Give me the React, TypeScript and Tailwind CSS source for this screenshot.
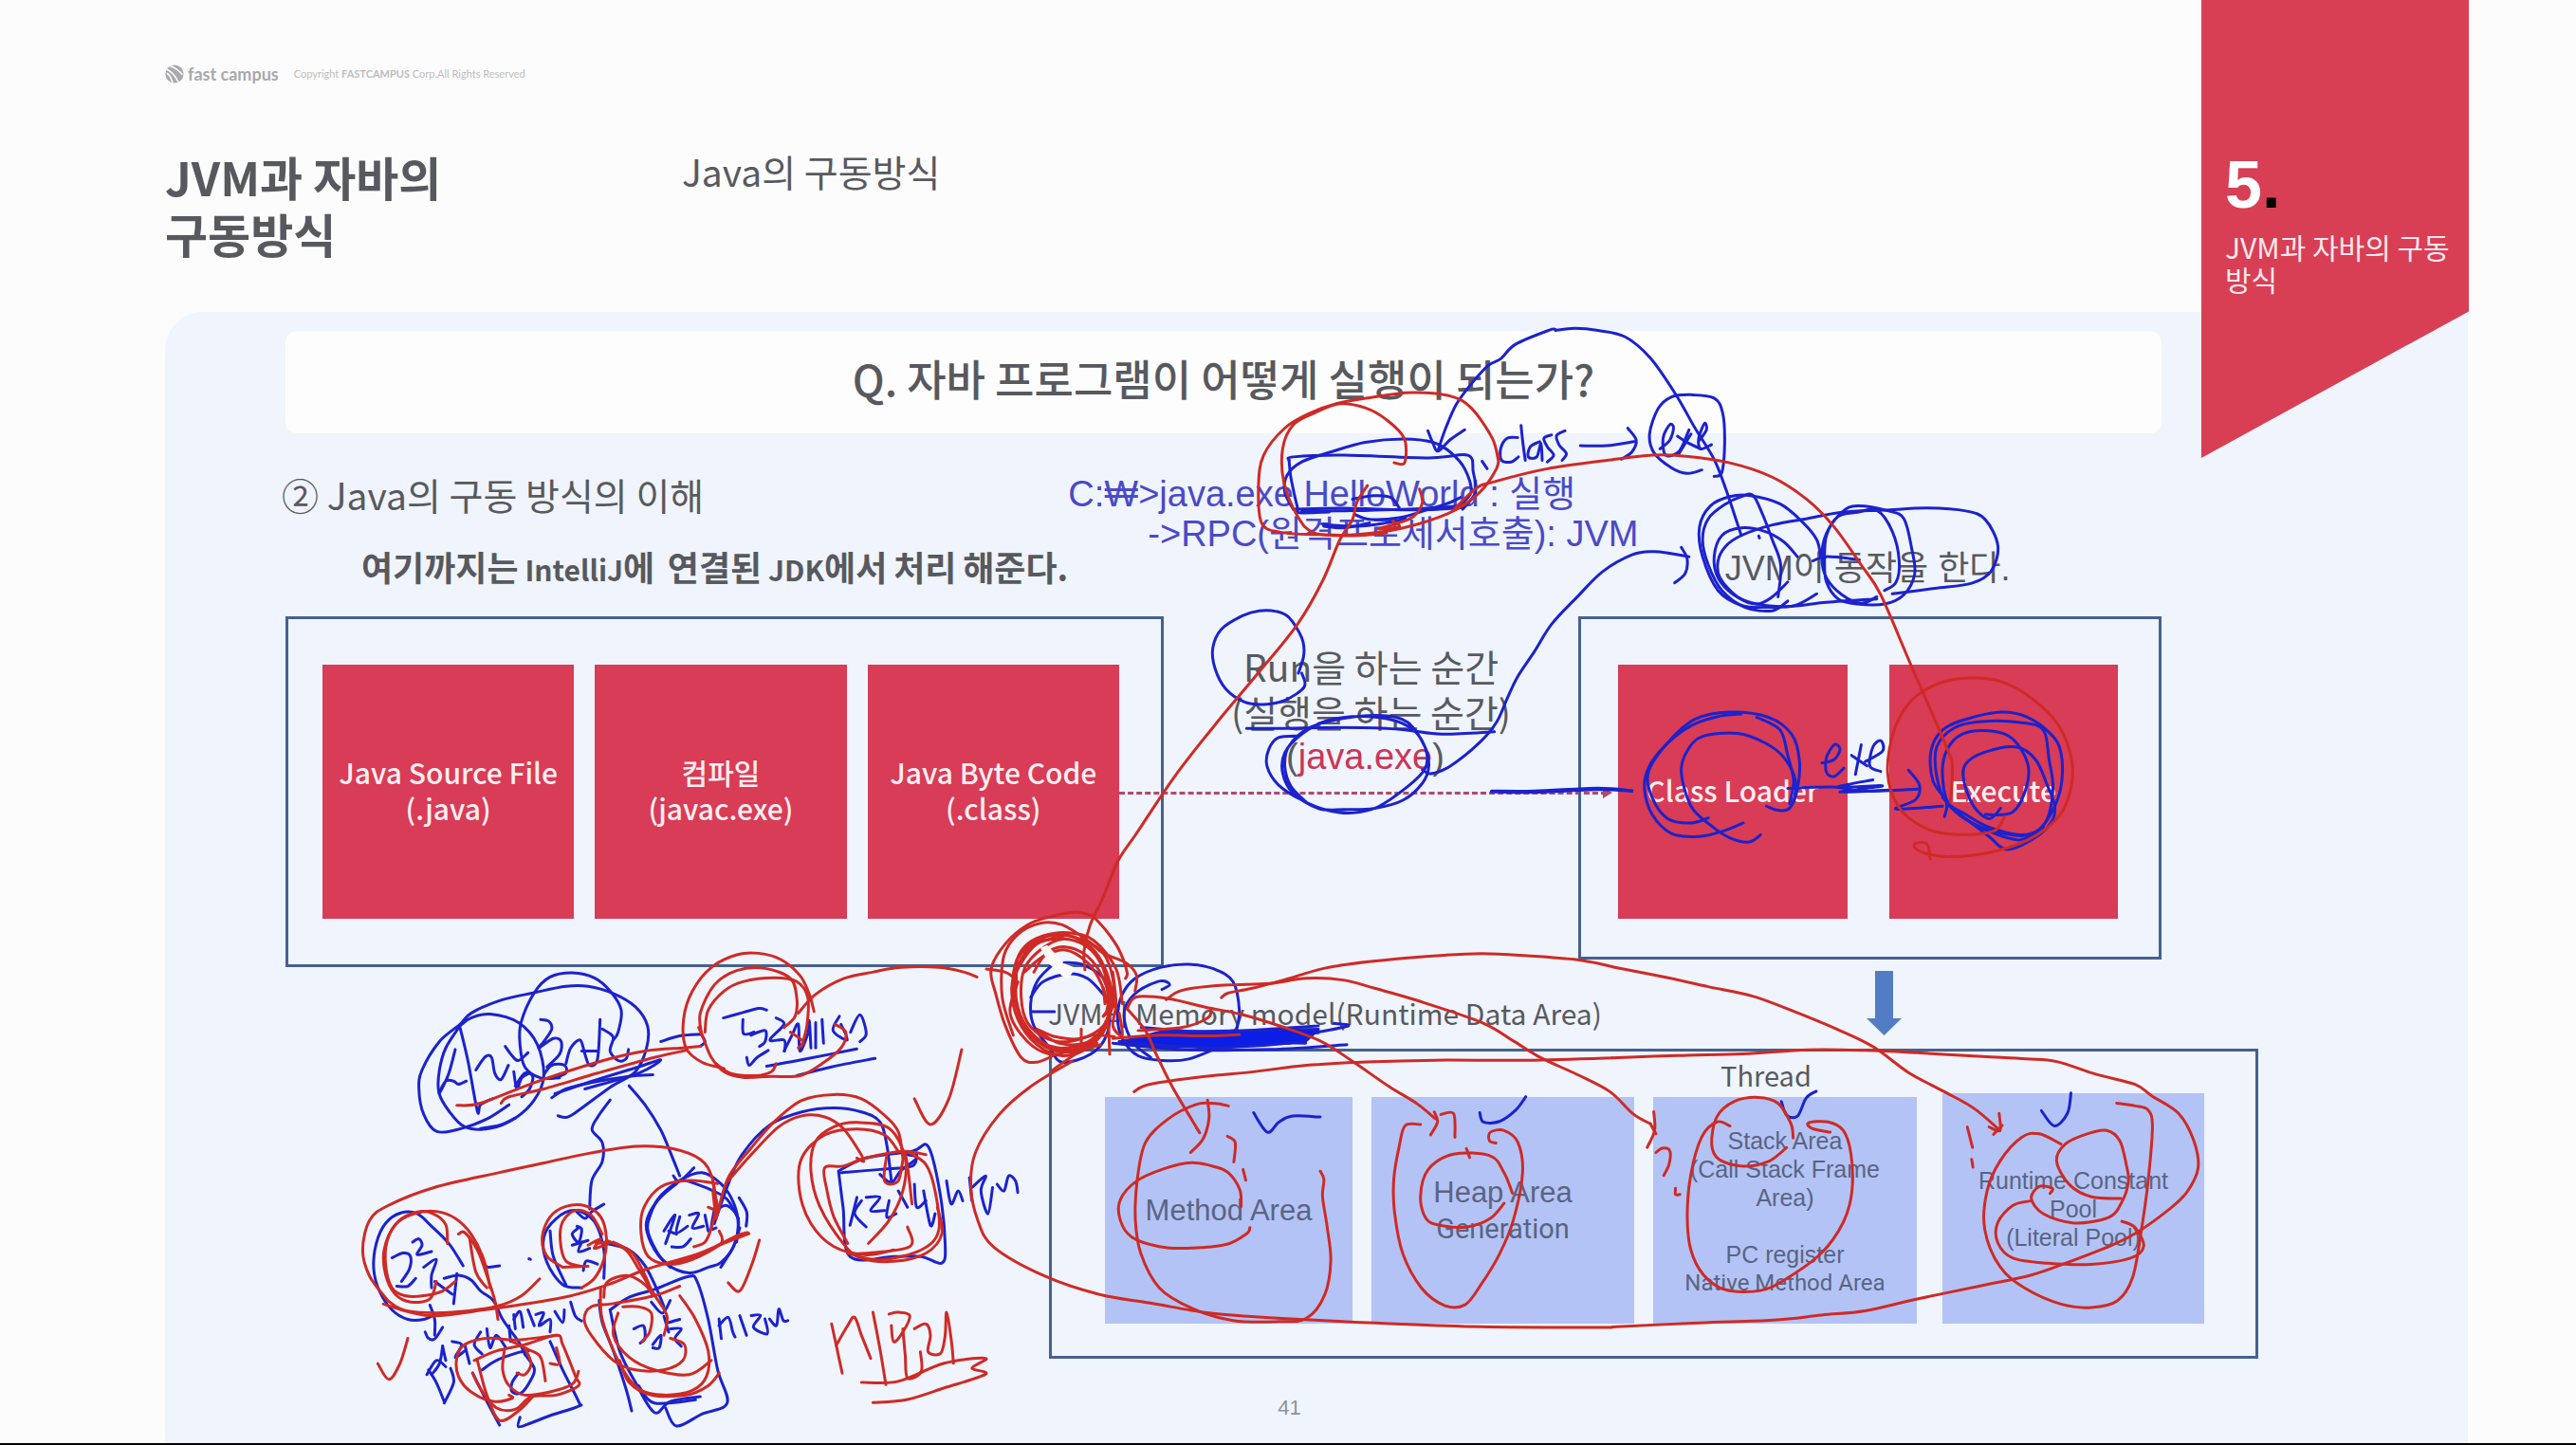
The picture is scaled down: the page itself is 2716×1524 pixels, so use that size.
import type { ReactNode } from "react";

const KR = "font-['Noto_Sans_CJK_KR',sans-serif]";
const SANS = "font-['Liberation_Sans','Noto_Sans_CJK_KR',sans-serif]";

/* ---------- pen annotations ---------- */

type Layer = {
  x: number;
  y: number;
  sx: number;
  sy: number;
  blue: string[];
  red: string[];
};

const layers: Layer[] = [
  {
    // command line, Run, java.exe
    x: 1060, y: 320, sx: 0.4464, sy: 0.3571,
    blue: [
      "1299,78 1285,80 1205,122 1170,165 1140,185 1100,240 1065,300 1040,370 1022,435",
      "998,378 1010,415 1022,438 1050,405 1085,375",
      "1126,468 1138,490",
      "1210,398 1185,400 1170,430 1172,465 1195,470 1212,455",
      "1218,362 1222,410 1228,465",
      "1262,410 1240,425 1235,455 1255,455 1265,415 1268,465",
      "1290,390 1272,400 1280,425 1295,450 1280,470",
      "1322,378 1302,392 1308,420 1325,445 1315,465",
      "1358,422 1420,422 1485,410",
      "1470,370 1490,405 1480,440 1455,462",
      "680,610 800,607 980,612 1080,605",
      "700,615 820,614 980,608 1075,600",
      "670,465 680,455 800,450 1000,458 1092,450 1105,500 1110,560 1080,610",
      "670,465 675,520 690,605 695,620 765,618",
      "680,610 660,560 665,510 700,470 770,440 850,412 940,402 1010,412 1050,440 1085,490 1100,560 1070,600",
      "820,580 870,570 910,575 930,605",
      "825,625 860,640 930,635 1000,610 1050,590 1075,575",
      "750,655 830,660 900,650 945,638",
      "752,660 800,665 860,650",
      "692,1095 705,1040 700,990 670,930 640,912 600,910 560,925 510,965 490,1020 495,1080 520,1140 565,1180 610,1187 660,1175 706,1135 700,1095",
      "570,1258 650,1258 780,1255 900,1258 960,1265 1030,1275 1155,1268",
      "695,1280 645,1285 622,1320 618,1370 645,1425 700,1470 760,1500 820,1508 880,1490 950,1430 990,1380 995,1330 970,1270 920,1235 840,1222 760,1235 700,1275 660,1330 655,1390 680,1450 740,1495 800,1498 870,1495 940,1470 985,1420 1000,1370 990,1310 950,1240 890,1220 800,1228 720,1255 670,1310 660,1370 675,1430 710,1475",
      "985,1380 1005,1392 1050,1370 1120,1300 1160,1240 1185,1170 1210,1105 1250,1030 1290,950 1350,870 1410,795 1480,745 1530,735 1568,740",
      "1148,1443 1250,1443 1400,1435 1480,1442",
      "1148,1445 1250,1447 1400,1439 1480,1444",
    ],
    red: [
      "1165,470 1150,400 1100,310 1050,275 960,265 860,280 780,298 720,325 660,370 610,450 598,540 605,650 650,678 740,685 830,685 940,665 1050,620 1120,560 1160,490 1165,450",
      "918,472 943,472 942,400 900,345 850,310 790,298 730,325 680,360 655,430 658,530 690,630 730,680 820,688 900,680",
      "855,540 830,590 820,640 790,700 750,820 690,950 600,1090 500,1240 400,1400 310,1568 266,1650 230,1760 200,1840 186,1915 188,1972",
      "978,550 985,590 965,630 930,650 880,668 930,662 915,645",
      "1060,610 1110,550 1150,530 1280,490 1436,463",
    ],
  },
  {
    // exe, JVM, class loader, execute
    x: 1640, y: 320, sx: 0.40816, sy: 0.44643,
    blue: [
      "480,550 440,440 410,370 360,295 310,215 245,130 180,80 110,65 50,60 0,65",
      "378,395 340,403 300,390 255,355 243,310 265,250 300,222 350,217 410,225 432,260 437,330 430,400 410,410",
      "270,345 295,325 305,295 295,288 278,320 285,360 320,350 345,300",
      "315,315 340,330 375,345",
      "320,355 350,310",
      "372,325 390,300 385,285 370,320 375,345 403,335",
      "294,592 345,600",
      "325,578 340,605 335,640 308,662",
      "675,688 620,715 550,720 480,715 420,680 380,600 372,530 400,480 450,458 500,455 580,475 640,520 675,560 685,600",
      "600,705 560,728 490,720 430,680 395,620 380,560 395,510 440,475 480,458 510,455 535,500 560,560 582,620 575,695",
      "625,600 590,565 540,540 480,532 430,550 410,600 420,650 460,690 520,712 600,718 700,708 830,700",
      "600,660 560,695 520,712 470,695 425,650 420,610 440,575 480,550 560,525 650,510 740,495 850,490 960,485 1060,492 1110,512 1143,575 1125,635 1075,663 980,675 870,688",
      "850,680 880,660 888,610 870,540 830,490 780,495 730,505 700,550 695,610 700,660 730,700 780,712 850,712 900,690 928,640 920,580 900,510 860,492 780,480 740,495 700,545 688,600 700,650 740,690 790,710 830,695",
      "665,610 700,600 785,607",
      "525,551 527,556",
      "480,972 420,978 350,1000 280,1050 240,1100 230,1150 250,1210 300,1255 370,1262 430,1250 485,1230",
      "395,1218 350,1230 290,1220 250,1170 240,1110 290,1040 360,985 450,968 550,980 610,1020 630,1080 625,1150 605,1195 575,1200 545,1190",
      "530,1258 500,1275 450,1265 400,1235 350,1190 325,1110 340,1060 380,1025 470,1018 540,1040 590,1075 620,1130 615,1180",
      "520,980 580,1010 600,1070 615,1130 605,1185",
      "600,1148 720,1145 800,1155 935,1150",
      "912,1105 940,1140 930,1175 880,1197 1000,1190",
      "820,1128 730,1145 845,1142 735,1157 860,1152",
      "688,1088 720,1080 735,1055 720,1045 700,1075 700,1110 720,1120 745,1100",
      "765,1070 805,1095",
      "790,1045 775,1115",
      "800,1085 845,1060 840,1035 820,1050 812,1095 840,1108",
      "1005,1215 1010,1180 975,1130 970,1060 1000,1010 1060,985 1150,968 1220,980 1280,1020 1305,1060 1308,1130 1290,1190 1250,1245 1200,1258 1120,1240 1060,1210 1010,1180 985,1120 985,1050 1030,1005 1100,990 1200,992 1260,1010 1275,1080 1285,1150 1265,1230 1210,1260 1100,1240 1020,1190 1000,1120 1010,1060 1050,1020 1120,1012 1180,1030 1220,1090 1215,1150 1180,1205 1110,1210",
      "1150,1195 1120,1220 1080,1190 1055,1130 1060,1090 1110,1062 1190,1050 1240,1080 1270,1140 1290,1190 1280,1230 1230,1270 1165,1293 1120,1262 1060,1220 1010,1185",
      "1000,1170 1050,1215 1120,1250 1200,1270 1260,1240",
    ],
    red: [
      "150,370 250,360 330,362 450,378 560,412 650,465 720,530 790,620 840,690 920,860 1010,1050 1025,1100 1020,1180",
      "1160,1215 1130,1250 1030,1257 950,1240 885,1190 858,1110 875,1010 920,940 990,900 1070,887 1150,895 1230,935 1300,1000 1335,1090 1325,1170 1290,1225 1220,1270 1120,1300 1020,1310 960,1303 930,1290 930,1278 960,1280 968,1315",
    ],
  },
  {
    // process / thread sketches
    x: 380, y: 980, sx: 0.4847, sy: 0.34694,
    blue: [
      "770,900 800,780 830,690 890,600 960,560 1030,548 1090,560 1130,590 1145,660 1155,770",
      "1130,750 1155,775 1175,740 1210,700 1190,690",
      "1040,740 1050,850 1065,1000 1160,1000 1220,1000 1265,1020 1272,960 1260,800 1235,665 1200,680 1100,700 1040,740",
      "1045,745 1130,735 1200,725 1210,690",
      "1080,820 1065,905",
      "1090,830 1075,870 1100,910",
      "1100,820 1130,820 1110,860 1140,860",
      "1150,830 1145,880 1165,870",
      "1170,800 1190,850",
      "1205,780 1210,850 1230,830",
      "1225,800 1240,905 1250,870",
      "1275,770 1285,840 1300,800 1310,830",
      "1325,760 1330,830",
      "1330,790 1360,755 1350,800 1365,870 1375,790",
      "1385,780 1400,800 1410,755 1425,770 1430,805",
      "780,1190 785,1250",
      "780,1210 800,1185 810,1230 815,1245",
      "825,1180 840,1240",
      "850,1180 870,1180 855,1215 885,1235 880,1190",
      "890,1190 905,1210 910,1160 920,1195 930,1195",
    ],
    red: [
      "1205,520 1240,598 1280,520 1308,370",
      "60,1135 20,1060 5,980 20,890 60,845 160,790 300,745 400,715 500,685 600,665 680,672 740,705 765,760 775,850",
      "60,1135 100,1165 200,1170 300,1150 350,1120 390,1068",
      "50,1145 150,1180 280,1160 440,1125 540,1085 620,1040 740,990 790,960 845,930",
      "800,1080 825,1105 850,1030 868,950",
      "775,880 800,760 850,670 900,590 960,525 1030,507 1090,520 1140,570 1170,620 1180,700",
      "800,770 850,690 910,605 960,572 1010,575 1050,610 1085,680 1095,710 1080,700",
      "1170,680 1140,630 1080,612 1010,630 960,700 955,800 980,900 1030,970 1100,995 1160,980",
      "1105,960 1150,890 1180,800 1185,700 1150,610 1080,592 1030,605 990,650 980,740 1000,850 1050,960 1090,1005 1160,1015 1230,990 1265,930 1255,850",
      "1060,960 1030,880 1015,800 1010,730 1050,725 1100,700 1180,680 1230,690",
      "1190,680 1230,720 1250,800 1258,920 1220,980 1130,1010 1060,990",
      "1190,910 1195,970 1100,990 1060,990",
      "1145,690 1140,770 1170,770 1185,690 1200,840",
      "1025,1205 1035,1270 1048,1355",
      "1035,1270 1060,1210 1075,1185 1090,1240 1110,1310",
      "1115,1170 1130,1280 1143,1390",
      "1150,1175 1170,1170 1195,1180 1180,1230 1160,1260 1155,1210",
      "1180,1220 1185,1300 1190,1370 1220,1350 1218,1290",
      "1205,1220 1230,1205 1240,1240 1235,1290 1262,1295 1272,1240 1275,1170 1285,1250 1290,1325",
      "1090,1383 1170,1380 1270,1325 1360,1310 1330,1340 1360,1358 1270,1400 1190,1435 1115,1445",
    ],
  },
  {
    // circled words above the process sketches
    x: 430, y: 1010, sx: 0.33333, sy: 0.33333,
    blue: [
      "320,470 250,515 170,545 92,555 50,500 35,420 45,360 100,270 165,215 200,180 290,140 400,115 500,95 570,95 650,118 720,160 758,220 755,290 720,365 640,415 530,495 500,510 475,505",
      "165,220 120,290 100,360 98,430 130,490 180,540 260,545 340,512 400,455 430,380 410,280 350,210 260,183 200,195 165,220",
      "340,512 290,535 230,545",
      "480,385 420,385 370,350 355,280 358,210 400,115 450,65 520,52 590,68 640,110 675,170 665,240 650,265",
      "165,225 190,330 220,490 230,470 270,450",
      "150,295 130,370 105,425 100,430 120,395 145,395 160,405 185,395",
      "215,360 245,318 265,320 275,370 295,390 318,345",
      "308,285 330,315 350,330 380,305",
      "335,365 345,420 360,385 385,370",
      "340,410 370,370 395,380 385,420 360,445",
      "420,200 445,205 455,230 430,270 415,290 460,260 485,270 480,310 440,350",
      "430,375 455,345 495,345 500,370 460,385",
      "500,340 515,290 545,265 560,310 575,345 600,325 608,200",
      "550,300 600,300",
      "615,230 640,245 650,260 640,300 665,330 690,325 698,295",
      "455,448 500,420 580,400 700,380 775,375",
      "465,435 600,390 730,350 800,328 730,370 560,420",
      "640,455 600,510 583,550 615,590 615,650 582,710 575,800",
      "530,805 560,830 580,810 620,785",
      "700,410 750,470 800,550 830,620 860,695",
      "840,695 860,712 905,670",
      "800,270 860,252 930,247",
      "930,250 940,270 925,285",
      "998,195 1060,178 1110,165 1135,170",
      "1060,200 1062,245 1095,240",
      "1085,250 1130,235 1130,270 1112,285",
      "1072,320 1080,345 1105,320 1140,298",
      "1165,195 1190,215 1145,265 1190,265 1192,300",
      "1190,300 1215,250 1235,215 1240,300 1265,245 1270,205 1275,290",
      "1290,210 1290,290",
      "1310,200 1315,275",
      "1365,190 1345,235 1390,265 1370,215",
      "1400,240 1430,185 1450,245 1430,270",
      "1135,348 1260,325 1420,293",
      "1230,378 1340,350 1478,323",
      "860,712 800,760 755,840 770,910 820,975 890,1003 950,985 990,970 1030,920 1045,850 1030,780 990,720 930,685 860,710 790,770 760,840",
      "850,720 785,780 758,860 790,940 830,985",
      "980,800 1010,790 1045,830 1040,905",
      "880,710 960,740 1010,770 1045,830",
      "1048,765 1072,810 1070,855",
      "820,975 880,965 920,950",
      "990,985 1030,920 1050,860",
      "810,870 845,820 815,910",
      "825,870 850,880",
      "860,825 850,875 885,855",
      "835,920 870,920 895,895",
      "890,820 920,815 900,860 935,855",
      "940,820 950,870",
      "970,800 960,860 975,860",
    ],
    red: [
      "155,472 230,465 400,400 600,335 750,300 870,290 925,285",
      "295,465 320,445 430,420 600,370 780,320 880,298",
      "1285,175 1270,120 1240,60 1180,10 1110,-10 1040,-5 960,35 900,110 872,200 880,290 930,335 1000,355",
      "930,250 925,180 970,90 1040,45 1130,38 1210,70 1230,130 1225,190 1190,225",
      "940,240 950,170 1000,110 1060,80 1160,68 1230,80 1265,130 1262,220 1245,285",
      "920,225 935,260 960,320 1000,365 1060,383 1150,380 1240,378 1310,340 1370,290 1385,240 1350,215",
      "1165,340 1150,365 1100,378 1020,370 975,340",
      "1210,240 1250,270 1235,290",
      "1235,180 1290,120 1380,70 1470,50 1560,35 1680,35 1760,50 1800,65",
      "980,720 890,710 800,730 745,800 738,880 760,950 820,975 900,960 990,910 985,870",
      "965,715 975,790 960,860 940,905 905,920",
      "950,795 980,800 965,740 975,830",
      "1075,875 1040,885 960,925 860,965 800,975",
    ],
  },
  {
    // lower left detail
    x: 380, y: 1260, sx: 0.33333, sy: 0.33333,
    blue: [
      "325,230 280,160 220,100 180,65 130,62 80,95 50,160 42,240 60,310 100,370 150,400 200,400 235,385",
      "100,205 135,190 158,200 155,240 130,280",
      "115,295 150,295 175,270",
      "165,155 185,145 195,165 180,195 225,185",
      "200,235 240,210 225,260 225,300",
      "235,280 290,320",
      "265,270 310,260 350,275 380,310 420,340 450,400 500,470 520,510",
      "305,255 295,350",
      "395,230 405,235 440,230",
      "533,208 538,210",
      "220,355 235,400 235,450",
      "205,440 215,460 235,462 260,425",
      "770,270 770,180 740,90 680,55 620,80 580,140 590,220 640,290 700,300",
      "600,120 610,200 650,290",
      "690,110 670,130 690,155 700,115 685,105",
      "670,165 720,150",
      "700,155 690,185 725,175",
      "705,245 715,215 750,225",
      "780,160 850,180 900,230 940,310 960,360",
      "920,345 955,380 980,340",
      "790,370 850,330 930,305 1035,265 1065,280 1100,400 1130,560 1160,665 1080,700 1000,738 965,680",
      "790,370 820,500 870,600 930,695 980,660 1075,645",
      "880,610 930,665 1060,655",
      "755,340 765,410 800,500 840,620 858,690",
      "865,430 895,420 900,460 885,475",
      "925,480 950,450 945,490 925,490",
      "960,390 975,440",
      "975,410 1010,400",
      "980,430 1015,430 995,460 1015,485",
      "485,385 490,430",
      "485,400 505,375 515,425",
      "530,370 550,420",
      "555,385 580,380 565,420 600,400 600,440",
      "615,375 640,410 645,370",
      "665,345 680,390 700,405",
      "260,485 270,530",
      "290,470 320,480 300,520 330,500",
      "330,480 345,540",
      "380,440 360,480 385,510",
      "400,430 410,490 430,450 460,490",
      "470,420 475,470",
      "210,575 240,530 270,550",
      "215,560 240,600 265,660",
      "285,555 295,600 265,665",
      "260,485 250,540 225,575",
      "385,560 430,530 500,505 530,500",
      "355,570 400,660 440,735",
      "600,470 640,560 690,660 690,675 600,705 540,728 500,740 505,710",
      "500,570 480,600 480,630 510,632 540,590 550,555 520,510",
    ],
    red: [
      "275,160 270,100 230,65 180,60 120,90 85,150 80,230 100,300 140,325 200,325 260,310 300,280",
      "410,300 390,210 350,130 300,80 240,58 170,65 110,100 75,180 80,260 110,320 160,345 220,335 240,280",
      "310,130 330,125 370,180 400,260 425,340 435,400",
      "345,140 365,250 400,300",
      "640,235 590,200 575,140 600,75 650,42 710,40 760,75 778,140 770,210 740,270 700,300",
      "700,232 650,215 632,150 640,90 680,55 730,70 765,130",
      "640,235 720,232",
      "720,165 760,145 740,175 790,155 745,160",
      "780,150 840,180 880,240 910,290 935,330 970,390 960,450",
      "800,155 860,190 900,260 925,320",
      "770,330 775,290 800,270 850,262 900,290 925,325",
      "1010,295 930,325 800,350 730,360 708,400 730,450 800,530 870,560 960,560 1020,530 1025,480 980,460",
      "760,300 765,400 820,540 880,620 960,640 1050,625 1095,580 1100,500 1060,400 1010,325",
      "830,360 880,360 920,380 915,440 890,470",
      "815,380 800,450 850,520 930,560 1040,575 1110,530",
      "820,530 850,600 920,640 1030,640 1100,610 1135,570",
      "360,530 430,500 520,480 620,450 640,480 680,580 690,610 620,640 540,645 490,685 430,680 380,620 355,570",
      "620,450 500,465 400,460 330,480 305,520 310,580 350,630 420,660 480,650 470,640",
      "455,500 450,560 470,610 520,640 600,630 670,605 690,565",
      "370,530 400,640 440,720 500,690 545,645",
      "480,470 530,495 570,520 585,595",
      "520,490 540,540 520,575 495,570",
      "600,540 630,540 620,490",
      "55,540 90,590 125,540 150,460",
    ],
  },
  {
    // memory areas, left half
    x: 980, y: 960, sx: 0.4847, sy: 0.35714,
    blue: [
      "705,602 735,660 760,630 790,612 850,615",
      "1197,602 1205,630 1240,628 1275,595 1297,555",
    ],
    red: [
      "430,295 450,260 520,265 600,290 680,312 760,345 850,390 920,450 1000,525 1060,575 1100,620",
      "1098,600 1105,630 1090,668",
      "430,295 470,360 490,420 530,530 585,655 580,645",
      "605,565 608,620 595,680 568,720",
      "515,268 550,240 640,225 740,220 820,205 900,210 970,235 1060,270 1200,335 1270,390 1330,440 1410,490 1480,540 1530,605 1568,635",
      "635,262 650,248 700,235 770,210 860,175 960,155 1080,140 1200,132 1300,138 1410,150 1485,170",
      "445,540 480,518 600,495 700,482 820,462 950,452 1100,447 1300,447 1485,440",
      "1485,1237 1200,1235 900,1220 700,1205 600,1193 480,1165 370,1140 250,1085 140,1000 105,920 90,820 100,720 150,610 220,525 310,450",
      "650,582 620,575 580,578 520,620 470,690 452,800 448,920 460,1020 500,1120 570,1180 660,1217 760,1220 820,1210 860,1140 873,1040 865,940 855,850 858,800 850,775",
      "678,880 675,830 650,780 620,762 570,750 510,768 450,805 415,860 415,920 440,970 500,998 560,1003 645,992 690,960 697,942",
      "648,672 665,690 662,748",
      "682,770 688,802",
      "1068,637 1035,640 1022,700 1010,800 1012,900 1030,1020 1070,1120 1120,1172 1165,1170 1200,1110 1240,1020 1270,920 1290,780 1280,690 1250,655 1220,660 1218,685 1232,692",
      "1268,840 1250,780 1220,730 1140,725 1085,770 1068,850 1080,915 1110,935 1170,940 1220,915 1250,870",
      "1168,708 1175,735",
      "1112,608 1140,605 1143,675",
    ],
  },
  {
    // memory areas, right half
    x: 1700, y: 960, sx: 0.45918, sy: 0.35969,
    blue: [
      "388,565 400,605 425,608 445,555 468,535",
      "985,592 1015,637 1045,600 1053,540",
    ],
    red: [
      "87,630 100,660",
      "95,595 97,650 80,700",
      "100,715 115,702 132,710 130,750 118,782",
      "145,820 145,838 155,838",
      "0,170 120,200 220,228 320,255 400,292 520,355 600,405 680,480 760,535 830,585 890,650",
      "888,600 890,650 865,640",
      "895,635 875,662",
      "0,437 150,430 300,425 450,413 580,415 700,422 850,433 950,440 1020,448 1110,485 1200,515 1240,550 1300,600 1335,680 1345,760 1320,830 1280,880 1210,945 1150,985 1040,1040 960,1075 850,1105 700,1145 580,1180 480,1192 370,1207 200,1215 0,1227",
      "270,637 240,625 205,670 180,780 172,900 180,1000 210,1075 260,1118 340,1120 400,1085 480,1010 530,920 550,830 548,720 530,650 495,625 450,628 460,645 500,655",
      "415,672 410,630 380,570 335,553 280,565 240,610 228,690 245,735 300,755 360,740 400,700",
      "1158,570 1200,578 1230,590 1240,640 1230,800 1215,940 1195,1080 1160,1150 1100,1170 1030,1160 950,1115 890,1050 855,940 860,830 890,740 940,670 980,660 1030,690",
      "1168,850 1100,845 1050,810 1020,740 1040,690 1090,660 1135,650 1165,680 1180,750 1185,800 1170,860 1140,905 1060,922 990,895 962,850 980,815 1010,820 1005,835",
      "960,857 920,870 885,920 885,980 920,1025 1000,1040 1100,1043 1190,1025 1220,990 1200,935 1170,917",
      "815,640 827,700",
      "825,735 828,758",
    ],
  },
  {
    // circled JVM and Memory
    x: 1040, y: 960, sx: 0.33333, sy: 0.33333,
    blue: [
      "205,180 160,230 140,300 150,370 200,440 240,485 330,460 380,400 390,310 370,220 300,175 240,170",
      "140,280 180,230 260,205 320,220 370,270",
      "145,325 215,325",
      "790,390 800,320 780,230 720,190 640,175 550,185 470,220 430,270 415,340 430,410 480,465 560,480 640,475 730,440",
      "555,255 580,240 550,228 480,260 440,310 440,370 470,430 520,470",
      "490,375 700,390 900,380 1050,370",
      "1050,390 1145,370 1100,362",
      "400,425 620,445 900,445 1140,430",
      "420,420 560,410 800,420 1010,425",
      "450,430 600,435 800,430 960,425",
      "550,415 750,425 950,412",
      "550,395 750,398 1050,392",
      "560,405 760,408 1000,400",
    ],
    red: [
      "330,20 280,10 200,25 130,50 60,110 15,190 30,270 60,370 110,470 160,485 220,460",
      "335,20 380,70 420,130 445,200 440,220",
      "85,400 50,280 55,150 100,80 170,45 240,50 320,100 370,140 440,170 475,210 470,260",
      "255,80 180,90 110,140 85,220 95,310 130,390 200,440 280,445 350,400 395,320 390,230 350,150 290,95 220,80 150,110 105,170 90,250 105,340 150,410 220,450 310,440 370,380 400,300 400,220 370,140 300,90",
      "240,90 160,110 105,180 80,250 100,350 160,430 240,465 320,440 380,370 385,280 370,190 320,120 240,95 170,130 120,190 110,280 130,360 190,410 260,420 340,400 405,405",
      "150,200 190,140 250,120 320,150 370,220 390,300 370,370 300,410 220,405 160,380",
      "430,300 410,190 340,100 260,75 180,85 120,120 90,180 85,250 110,350 170,420 230,440 290,435",
      "120,200 180,150 250,130 320,170 365,240 375,300",
      "100,230 75,330 130,420 200,460 260,450 330,420",
      "95,210 95,290 125,370 190,430 270,455 350,425",
      "180,100 260,85 330,120 380,200 395,290",
      "170,390 230,425 310,425 370,385",
      "400,200 410,300 400,370 430,400 420,330",
      "370,250 385,310 370,340 410,300",
      "0,190 60,200 90,220",
      "300,380 300,440",
      "385,320 390,460",
      "360,430 290,455 210,510",
      "480,385 620,375 700,345 710,320",
      "400,410 550,400 700,402 800,398",
    ],
  },
];

/** Smooth curve through the pen samples (Catmull-Rom converted to cubic Béziers). */
function inkPath(samples: string, l: Layer): string {
  const p = samples.split(" ").map((s) => {
    const [a, b] = s.split(",").map(Number);
    return [l.x + a * l.sx, l.y + b * l.sy];
  });
  const f = (n: number) => n.toFixed(1);
  let d = `M${f(p[0][0])} ${f(p[0][1])}`;
  for (let i = 0; i < p.length - 1; i++) {
    const a = p[Math.max(i - 1, 0)];
    const b = p[i];
    const c = p[i + 1];
    const e = p[Math.min(i + 2, p.length - 1)];
    d += `C${f(b[0] + (c[0] - a[0]) / 6)} ${f(b[1] + (c[1] - a[1]) / 6)} ${f(c[0] - (e[0] - b[0]) / 6)} ${f(c[1] - (e[1] - b[1]) / 6)} ${f(c[0])} ${f(c[1])}`;
  }
  return d;
}

function Annotations() {
  return (
    <svg
      viewBox="0 0 2716 1524"
      preserveAspectRatio="none"
      aria-hidden="true"
      className="pointer-events-none absolute inset-0 h-full w-full"
      fill="none"
      strokeWidth="3"
      strokeLinecap="round"
      strokeLinejoin="round"
    >
      <g stroke="#1c22cc">
        {layers.map((l) => l.blue.map((s) => <path key={s} d={inkPath(s, l)} />))}
        <path
          d="M1180 1101 1223 1090 1390 1087 1376 1100 1333 1104 1280 1107Z"
          fill="#0a1ee6"
        />
      </g>
      <g stroke="#cf2a25">
        {layers.map((l) => l.red.map((s) => <path key={s} d={inkPath(s, l)} />))}
      </g>
      <g fill="#fdfaf6">
        <path d="M1097 1001 1104 998 1121 1016 1116 1026 1106 1018Z" />
        <path d="M1113 1022 1121 1017 1134 1022 1126 1034 1119 1030Z" />
      </g>
    </svg>
  );
}

/* ---------- slide ---------- */

function Logo() {
  return (
    <div className="flex items-center text-[#a9a9ab]">
      <svg viewBox="0 0 20 20" className="h-5 w-5" aria-hidden="true">
        <circle cx="10" cy="10" r="9.6" fill="currentColor" />
        <g stroke="#fcfcfd" strokeWidth="1.6" fill="none">
          <path d="M5 1.500 Q13 4 18.500 11" />
          <path d="M1.500 5 Q9 8 14 18.500" />
          <path d="M2 9 Q6 12 8 19" />
        </g>
      </svg>
      <span className="ml-1 font-['Lato',sans-serif] text-[18px] leading-7 font-bold">
        fast campus
      </span>
      <small className="ml-4 font-['Lato',sans-serif] text-[11px] leading-7 text-[#bcbcbe]">
        Copyright <b>FASTCAMPUS</b> Corp.All Rights Reserved
      </small>
    </div>
  );
}

function Step({ children }: { children: ReactNode }) {
  return (
    <div
      className={`flex flex-1 items-center justify-center bg-[#d83c56] pb-1 text-center text-[30px] leading-[38px] font-medium text-[#fdeef1] ${KR}`}
    >
      <p>{children}</p>
    </div>
  );
}

function Frame({ className, children }: { className: string; children: ReactNode }) {
  return <div className={`flex border-3 border-[#45618f] ${className}`}>{children}</div>;
}

export default function App() {
  return (
    <main
      className={`relative flex min-h-screen flex-col border-b-2 border-black bg-[#fcfcfd] pr-[114px] pl-[174px] text-[#58595e] ${KR}`}
    >
      <header className="flex h-[329px] flex-col pt-16">
        <Logo />
        <div className="mt-16 flex">
          <h1 className="w-[545px] text-[49px] leading-[60px] font-bold">
            JVM과 자바의
            <br />
            구동방식
          </h1>
          <p className="text-[39px] leading-12">Java의 구동방식</p>
        </div>
      </header>

      <section className="flex flex-1 flex-col rounded-tl-[40px] bg-[#eff4fd] pt-5 pl-[127px]">
        <h2 className="mr-[323px] rounded-xl bg-[#fdfdfe] pb-2 text-center text-[45px] leading-[100px] font-medium">
          Q. 자바 프로그램이 어떻게 실행이 되는가?
        </h2>

        <div className="mt-8 mr-[323px] grid h-[142px] grid-cols-[820fr_695fr_462fr]">
          <div className="flex flex-col gap-3 whitespace-pre">
            <h3 className="-ml-1 text-[39px] leading-16">② Java의 구동 방식의 이해</h3>
            <p className="pl-20 text-[36px] leading-16 font-bold">
              여기까지는<span className="text-[30px]"> IntelliJ</span>에
              <span className="text-[30px]">{"  "}</span>연결된
              <span className="text-[30px]"> JDK</span>에서
              <span className="text-[30px]"> </span>처리
              <span className="text-[30px]"> </span>해준다.
            </p>
          </div>
          <p className={`pt-[11px] text-[38px] leading-[42px] whitespace-nowrap text-[#4a4ac6] ${SANS}`}>
            C:₩&gt;java.exe HelloWorld : 실행
            <span className="block pl-[84px]">-&gt;RPC(원격프로세서호출): JVM</span>
          </p>
          <p className={`self-end text-[36px] leading-16 whitespace-nowrap ${SANS}`}>
            JVM이 동작을 한다.
          </p>
        </div>

        <div className="mt-[19px] mr-[323px] grid h-[370px] grid-cols-[926fr_437fr_615fr] items-start">
          <Frame className="h-[370px] gap-[22px] pt-12 pr-11 pb-12 pl-9">
            <Step>
              Java Source File
              <br />
              (.java)
            </Step>
            <Step>
              컴파일
              <br />
              (javac.exe)
            </Step>
            <Step>
              Java Byte Code
              <br />
              (.class)
            </Step>
          </Frame>
          <div className={`flex flex-col items-center pt-7 text-[39px] leading-12 ${KR}`}>
            <p className="text-center whitespace-nowrap">
              Run을 하는 순간
              <br />
              (실행을 하는 순간)
            </p>
            <p className={`pr-3 text-[38px] ${SANS}`}>
              (<span className="text-[#cc3556]">java.exe</span>)
            </p>
            <div className="mt-2 -mr-[36px] -ml-[47px] flex items-center self-stretch">
              <div className="flex-1 border-t-3 border-dashed border-[#b04a6c]" />
              <svg viewBox="0 0 10 12" className="-ml-1 h-3 w-[10px]" aria-hidden="true">
                <path d="M0 0 10 6 0 12Z" fill="#b04a6c" />
              </svg>
            </div>
          </div>
          <Frame className="h-[362px] gap-11 pt-12 pr-[43px] pb-10 pl-[39px]">
            <Step>Class Loader</Step>
            <Step>Execute</Step>
          </Frame>
        </div>

        <div className="flex h-[86px] items-start justify-between pr-[597px] pl-[804px]">
          <p className="pt-6 text-[30px] leading-12 whitespace-nowrap">
            JVM의 Memory model(Runtime Data Area)
          </p>
          <svg viewBox="0 0 37 68" className="mt-1 h-[68px] w-[37px]" aria-hidden="true">
            <path d="M9 0H28V50H37L18.500 68 0 50H9Z" fill="#527cc4" />
          </svg>
        </div>

        <Frame className="mr-[221px] ml-[805px] h-[327px] pt-12 pr-[54px] pb-[34px] pl-14">
          <div className={`grid w-full grid-cols-[261fr_277fr_278fr_283fr] gap-5 text-center text-[25px] leading-[30px] text-[#5a6482] ${SANS}`}>
            <div className="flex items-center justify-center bg-[#b3c3f5] text-[31px]">
              Method Area
            </div>
            <div className="flex flex-col items-center justify-center bg-[#b3c3f5] text-[31px] leading-[38px]">
              Heap Area
              <span className="font-['Roboto',sans-serif] text-[29px]">Generation</span>
            </div>
            <div className="relative flex flex-col items-center bg-[#b3c3f5] pt-[31px]">
              <p className={`absolute -top-12 w-full pr-10 text-[29px] leading-12 text-[#58595e] ${KR}`}>
                Thread
              </p>
              <p>
                Stack Area
                <br />
                (Call Stack Frame
                <br />
                Area)
                <br />
                <br />
                PC register
              </p>
              <p className="font-['Roboto',sans-serif] text-[24px]">Native Method Area</p>
            </div>
            <div className="-mt-1 ml-[7px] flex items-center justify-center bg-[#b3c3f5]">
              <p>
                Runtime Constant
                <br />
                Pool
                <br />
                (Literal Pool)
              </p>
            </div>
          </div>
        </Frame>

        <p className={`mt-9 pr-[184px] text-center text-[22px] leading-8 text-[#909298] ${SANS}`}>
          41
        </p>
      </section>

      <aside className="absolute top-0 right-[113px] h-[483px] w-[282px] bg-[#d83f55] pt-[155px] pl-[25px] text-[#fde9ee] [clip-path:polygon(0_0,100%_0,100%_68%,0_100%)]">
        <p className={`text-[70px] leading-20 font-bold text-white ${SANS}`}>
          5<span className="text-black">.</span>
        </p>
        <p className="mt-2 text-[30px] leading-[34px] break-all">JVM과 자바의 구동방식</p>
      </aside>

      <Annotations />
    </main>
  );
}
